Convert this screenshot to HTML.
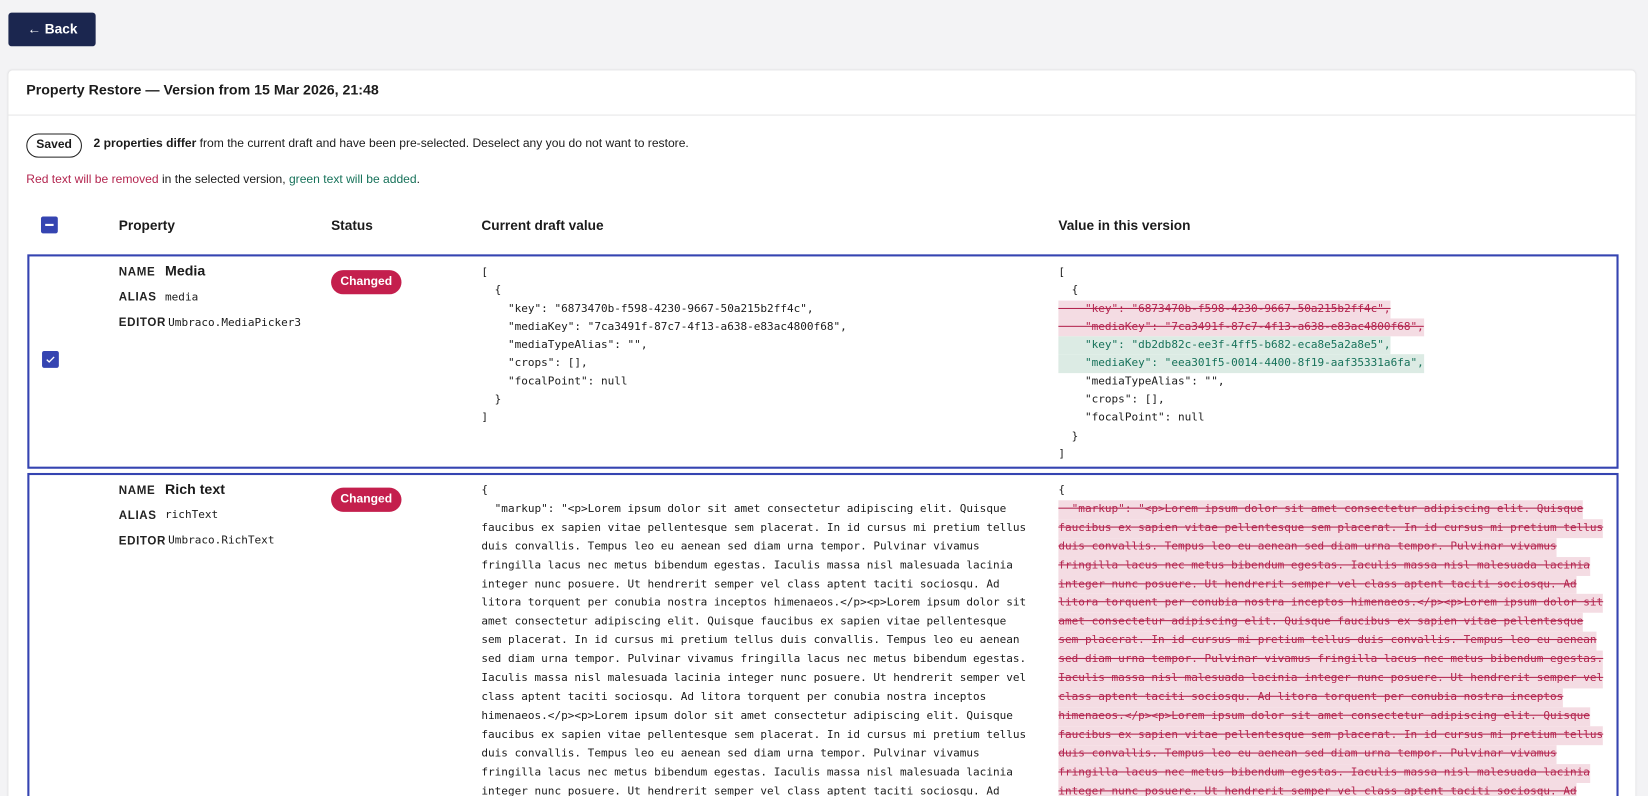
<!DOCTYPE html>
<html><head><meta charset="utf-8"><style>
*{box-sizing:border-box;margin:0;padding:0}
html,body{width:1648px;height:796px;overflow:hidden;background:#f3f3f5}
body{font-family:"Liberation Sans",sans-serif;color:#1b1b1b;position:relative}
#w{position:absolute;left:0;top:0;width:1568px;height:760px;transform:scale(1.05102);transform-origin:0 0}
.abs{position:absolute}
.back{left:8px;top:12px;width:83px;height:32px;background:#1b264f;border-radius:3px;color:#fff;font-weight:bold;font-size:13px;line-height:32px;padding-left:18px}
.card{left:8px;top:67px;width:1548px;height:760px;background:#fff;border-radius:4px;box-shadow:0 0 2px rgba(0,0,0,.12)}
.mono{font-family:"DejaVu Sans Mono",monospace;font-size:10.5px;white-space:pre;color:#1b1b1b}
.row{border:2px solid #3544b1;left:26px;width:1514px;background:#fff}
.lbl{font-size:11px;font-weight:bold;letter-spacing:.6px;color:#222}
.pill{width:67px;height:23px;border-radius:12px;background:#c41f4d;color:#fff;font-weight:bold;font-size:11.5px;text-align:center;line-height:23px}
.cb{width:16px;height:16px;background:#3544b1;border-radius:2px}
.del{display:block;width:fit-content;background:#f4dce3;color:#b3254f;text-decoration:line-through}
.add{display:block;width:fit-content;background:#dcebe4;color:#17725a}
</style></head><body><div id="w">
<div class="abs back">← Back</div>
<div class="abs card"></div>
<div class="abs" style="left:25px;top:78px;font-size:13.5px;font-weight:bold;">Property Restore — Version from 15 Mar 2026, 21:48</div>
<div class="abs" style="left:8px;top:109px;width:1548px;height:1px;background:#e6e6e8"></div>
<div class="abs" style="left:25px;top:127px;width:53px;height:23px;border:1px solid #222;border-radius:12px;font-size:11.5px;text-align:center;line-height:21px;font-weight:bold">Saved</div>
<div class="abs" style="left:89px;top:131px;font-size:11.5px"><b>2 properties differ</b> from the current draft and have been pre-selected. Deselect any you do not want to restore.</div>
<div class="abs" style="left:25px;top:165px;font-size:11.5px"><span style="color:#b3254f">Red text will be removed</span> in the selected version, <span style="color:#17725a">green text will be added</span>.</div>
<div class="abs cb" style="left:39px;top:206px"><div style="position:absolute;left:4px;top:7px;width:8px;height:2px;background:#fff"></div></div>
<div class="abs" style="left:113px;top:207px;font-size:13px;font-weight:bold">Property</div>
<div class="abs" style="left:315px;top:207px;font-size:13px;font-weight:bold">Status</div>
<div class="abs" style="left:458px;top:207px;font-size:13px;font-weight:bold">Current draft value</div>
<div class="abs" style="left:1007px;top:207px;font-size:13px;font-weight:bold">Value in this version</div>

<div class="abs row" style="top:242px;height:204px"></div>
<div class="abs lbl" style="left:113px;top:253px">NAME</div><div class="abs" style="left:157px;top:250px;font-size:13.5px;font-weight:bold">Media</div>
<div class="abs lbl" style="left:113px;top:277px">ALIAS</div><div class="abs mono" style="left:157px;top:277px">media</div>
<div class="abs lbl" style="left:113px;top:301px">EDITOR</div><div class="abs mono" style="left:160px;top:301px">Umbraco.MediaPicker3</div>
<div class="abs pill" style="left:315px;top:257px">Changed</div>
<div class="abs cb" style="left:40px;top:334px"><svg width="16" height="16" viewBox="0 0 16 16"><path d="M4.5 8.2l2.3 2.2 4.7-4.8" stroke="#fff" stroke-width="1.3" fill="none"/></svg></div>
<div class="abs mono" style="left:458px;top:251px;line-height:17.3px">[
  {
    "key": "6873470b-f598-4230-9667-50a215b2ff4c",
    "mediaKey": "7ca3491f-87c7-4f13-a638-e83ac4800f68",
    "mediaTypeAlias": "",
    "crops": [],
    "focalPoint": null
  }
]</div>
<div class="abs mono" style="left:1007px;top:251px;line-height:17.3px">[
  {
<span class="del">    "key": "6873470b-f598-4230-9667-50a215b2ff4c",</span><span class="del">    "mediaKey": "7ca3491f-87c7-4f13-a638-e83ac4800f68",</span><span class="add">    "key": "db2db82c-ee3f-4ff5-b682-eca8e5a2a8e5",</span><span class="add">    "mediaKey": "eea301f5-0014-4400-8f19-aaf35331a6fa",</span>    "mediaTypeAlias": "",
    "crops": [],
    "focalPoint": null
  }
]</div>

<div class="abs row" style="top:450px;height:400px"></div>
<div class="abs lbl" style="left:113px;top:461px">NAME</div><div class="abs" style="left:157px;top:458px;font-size:13.5px;font-weight:bold">Rich text</div>
<div class="abs lbl" style="left:113px;top:485px">ALIAS</div><div class="abs mono" style="left:157px;top:484px">richText</div>
<div class="abs lbl" style="left:113px;top:509px">EDITOR</div><div class="abs mono" style="left:160px;top:508px">Umbraco.RichText</div>
<div class="abs pill" style="left:315px;top:464px">Changed</div>
<div class="abs mono" style="left:458px;top:458px;line-height:17.9px">{
  "markup": "&lt;p&gt;Lorem ipsum dolor sit amet consectetur adipiscing elit. Quisque
faucibus ex sapien vitae pellentesque sem placerat. In id cursus mi pretium tellus
duis convallis. Tempus leo eu aenean sed diam urna tempor. Pulvinar vivamus
fringilla lacus nec metus bibendum egestas. Iaculis massa nisl malesuada lacinia
integer nunc posuere. Ut hendrerit semper vel class aptent taciti sociosqu. Ad
litora torquent per conubia nostra inceptos himenaeos.&lt;/p&gt;&lt;p&gt;Lorem ipsum dolor sit
amet consectetur adipiscing elit. Quisque faucibus ex sapien vitae pellentesque
sem placerat. In id cursus mi pretium tellus duis convallis. Tempus leo eu aenean
sed diam urna tempor. Pulvinar vivamus fringilla lacus nec metus bibendum egestas.
Iaculis massa nisl malesuada lacinia integer nunc posuere. Ut hendrerit semper vel
class aptent taciti sociosqu. Ad litora torquent per conubia nostra inceptos
himenaeos.&lt;/p&gt;&lt;p&gt;Lorem ipsum dolor sit amet consectetur adipiscing elit. Quisque
faucibus ex sapien vitae pellentesque sem placerat. In id cursus mi pretium tellus
duis convallis. Tempus leo eu aenean sed diam urna tempor. Pulvinar vivamus
fringilla lacus nec metus bibendum egestas. Iaculis massa nisl malesuada lacinia
integer nunc posuere. Ut hendrerit semper vel class aptent taciti sociosqu. Ad
litora torquent per conubia nostra inceptos himenaeos.&lt;/p&gt;&lt;p&gt;Lorem ipsum dolor sit</div>
<div class="abs mono" style="left:1007px;top:458px;line-height:17.9px">{
<span class="del">  "markup": "&lt;p&gt;Lorem ipsum dolor sit amet consectetur adipiscing elit. Quisque</span><span class="del">faucibus ex sapien vitae pellentesque sem placerat. In id cursus mi pretium tellus</span><span class="del">duis convallis. Tempus leo eu aenean sed diam urna tempor. Pulvinar vivamus</span><span class="del">fringilla lacus nec metus bibendum egestas. Iaculis massa nisl malesuada lacinia</span><span class="del">integer nunc posuere. Ut hendrerit semper vel class aptent taciti sociosqu. Ad</span><span class="del">litora torquent per conubia nostra inceptos himenaeos.&lt;/p&gt;&lt;p&gt;Lorem ipsum dolor sit</span><span class="del">amet consectetur adipiscing elit. Quisque faucibus ex sapien vitae pellentesque</span><span class="del">sem placerat. In id cursus mi pretium tellus duis convallis. Tempus leo eu aenean</span><span class="del">sed diam urna tempor. Pulvinar vivamus fringilla lacus nec metus bibendum egestas.</span><span class="del">Iaculis massa nisl malesuada lacinia integer nunc posuere. Ut hendrerit semper vel</span><span class="del">class aptent taciti sociosqu. Ad litora torquent per conubia nostra inceptos</span><span class="del">himenaeos.&lt;/p&gt;&lt;p&gt;Lorem ipsum dolor sit amet consectetur adipiscing elit. Quisque</span><span class="del">faucibus ex sapien vitae pellentesque sem placerat. In id cursus mi pretium tellus</span><span class="del">duis convallis. Tempus leo eu aenean sed diam urna tempor. Pulvinar vivamus</span><span class="del">fringilla lacus nec metus bibendum egestas. Iaculis massa nisl malesuada lacinia</span><span class="del">integer nunc posuere. Ut hendrerit semper vel class aptent taciti sociosqu. Ad</span><span class="del">litora torquent per conubia nostra inceptos himenaeos.&lt;/p&gt;&lt;p&gt;Lorem ipsum dolor sit</span></div>
</div></body></html>
